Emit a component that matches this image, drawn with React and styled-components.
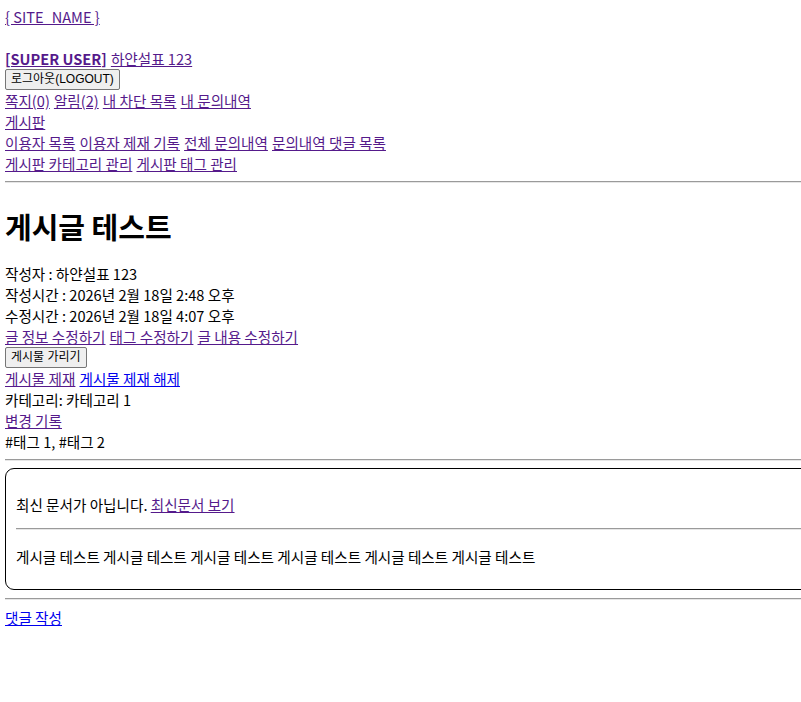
import React from "react";
import styled, { createGlobalStyle } from "styled-components";

const Global = createGlobalStyle`
  html, body { overflow-x: hidden; }
  body {
    margin: 0;
    padding: 6px 0 0 5px;
    font-family: "Noto Sans CJK KR", "Noto Sans", sans-serif;
    font-size: 14.6px;
    line-height: 21px;
    color: #000;
    background: #fff;
  }
`;

const Page = styled.div`
  width: 860px;
`;

const Link = styled.a`
  color: ${(p) => (p.$fresh ? "#0000ee" : "#551a8b")};
  text-decoration: underline;
  font-weight: ${(p) => (p.$bold ? 700 : 400)};
  cursor: pointer;
`;

const Line = styled.div`
  display: flex;
  gap: 0.28em;
  white-space: nowrap;
`;

const UserBlock = styled.div`
  margin-top: 21px;
`;

const Button = styled.button`
  display: block;
  font-family: "Liberation Sans", "Noto Sans CJK KR", sans-serif;
  font-size: 12px;
  line-height: 14px;
  padding: 2px 5px 3px;
  margin: 0;
  background: #efefef;
  border: 1px solid #767676;
  border-radius: 2px;
  color: #000;
`;

const Rule = styled.hr`
  border: none;
  border-top: 1px solid #9a9a9a;
  border-bottom: 1px solid #e6e6e6;
  margin: ${(p) => p.$margin || "7px 0"};
`;

const Title = styled.h1`
  font-size: 29px;
  line-height: 40px;
  font-weight: 700;
  margin: 23px 0 17px;
`;

const Text = styled.div`
  white-space: nowrap;
`;

const DocBox = styled.div`
  border: 1px solid #000;
  border-radius: 9px;
  padding: 0 10px;
  margin: 7px 0 8px;
`;

const BoxPara = styled.p`
  margin: ${(p) => p.$margin};
  white-space: nowrap;
`;

export default function App() {
  return (
    <Page>
      <Global />
      <Text>
        <Link>{"{ SITE_NAME }"}</Link>
      </Text>
      <UserBlock>
        <Line>
          <Link $bold>[SUPER USER]</Link>
          <Link>하얀설표 123</Link>
        </Line>
        <Button>로그아웃(LOGOUT)</Button>
        <Line>
          <Link>쪽지(0)</Link>
          <Link>알림(2)</Link>
          <Link>내 차단 목록</Link>
          <Link>내 문의내역</Link>
        </Line>
        <Line>
          <Link>게시판</Link>
        </Line>
        <Line>
          <Link>이용자 목록</Link>
          <Link>이용자 제재 기록</Link>
          <Link>전체 문의내역</Link>
          <Link>문의내역 댓글 목록</Link>
        </Line>
        <Line>
          <Link>게시판 카테고리 관리</Link>
          <Link>게시판 태그 관리</Link>
        </Line>
      </UserBlock>
      <Rule />
      <Title>게시글 테스트</Title>
      <Text>작성자 : 하얀설표 123</Text>
      <Text>작성시간 : 2026년 2월 18일 2:48 오후</Text>
      <Text>수정시간 : 2026년 2월 18일 4:07 오후</Text>
      <Line>
        <Link>글 정보 수정하기</Link>
        <Link>태그 수정하기</Link>
        <Link>글 내용 수정하기</Link>
      </Line>
      <Button>게시물 가리기</Button>
      <Line>
        <Link>게시물 제재</Link>
        <Link $fresh>게시물 제재 해제</Link>
      </Line>
      <Text>카테고리: 카테고리 1</Text>
      <Line>
        <Link>변경 기록</Link>
      </Line>
      <Text>#태그 1, #태그 2</Text>
      <Rule />
      <DocBox>
        <BoxPara $margin="25px 0 13px">
          최신 문서가 아닙니다. <Link>최신문서 보기</Link>
        </BoxPara>
        <Rule $margin="0" />
        <BoxPara $margin="16px 0 22px">
          게시글 테스트 게시글 테스트 게시글 테스트 게시글 테스트 게시글 테스트 게시글 테스트
        </BoxPara>
      </DocBox>
      <Rule $margin="0 0 7px" />
      <Line>
        <Link $fresh>댓글 작성</Link>
      </Line>
    </Page>
  );
}
